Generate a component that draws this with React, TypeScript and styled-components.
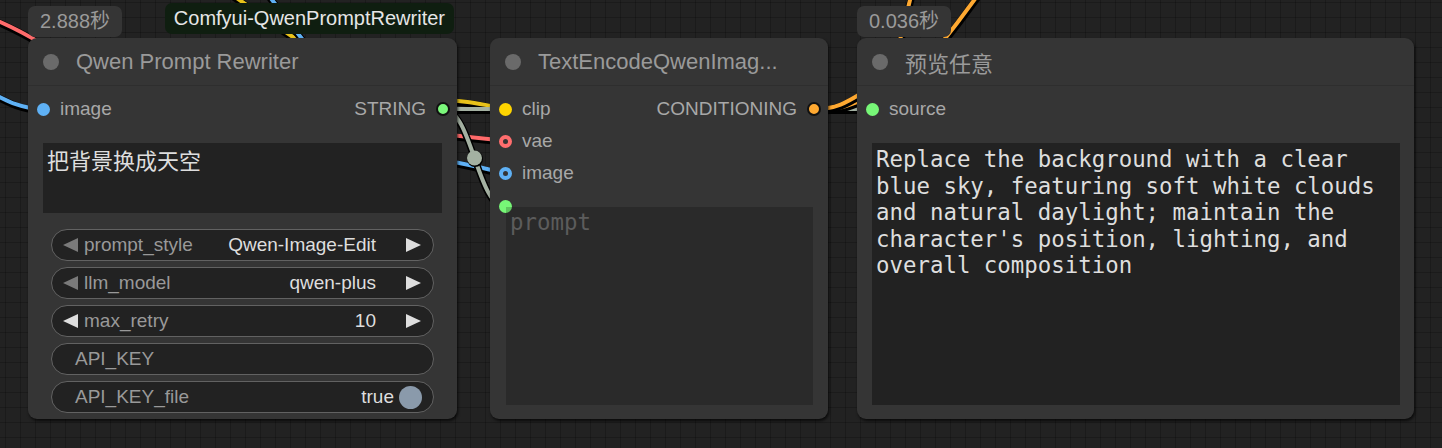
import React from "react";
import styled, { createGlobalStyle } from "styled-components";

const UI = `"Liberation Sans", "Noto Sans CJK SC", sans-serif`;
const MONO = `"DejaVu Sans Mono", "Noto Sans CJK SC", monospace`;

const GlobalStyle = createGlobalStyle`
  html, body { margin: 0; padding: 0; background: #222; }
  body { width: 1442px; height: 448px; overflow: hidden; }
  * { box-sizing: border-box; }
`;

const Canvas = styled.div`
  position: relative;
  width: 1442px;
  height: 448px;
  overflow: hidden;
  background-color: #222222;
  background-image:
    linear-gradient(rgba(0, 0, 0, 0.22) 1px, transparent 1px),
    linear-gradient(90deg, rgba(0, 0, 0, 0.22) 1px, transparent 1px);
  background-size: 15px 15px;
  background-position: 5px 2px;
  font-family: ${UI};
`;

const WireLayer = styled.svg`
  position: absolute;
  left: 0;
  top: 0;
  width: 1442px;
  height: 448px;
  overflow: visible;
`;

const NodeWrap = styled.div<{ $x: number; $w: number }>`
  position: absolute;
  left: ${(p) => p.$x}px;
  top: 0;
  width: ${(p) => p.$w}px;
  display: flex;
  flex-direction: column;
`;

const BadgeRow = styled.div`
  height: 38px;
  display: flex;
  justify-content: space-between;
  align-items: flex-start;
`;

const TimeBadge = styled.div`
  margin-top: 6px;
  height: 31px;
  padding: 0 12px;
  border-radius: 7px;
  background: #353535;
  color: #9a9a9a;
  font-size: 20px;
  line-height: 31px;
  white-space: nowrap;
`;

const SourceBadge = styled.div`
  margin-top: 3px;
  margin-right: 3px;
  height: 31px;
  padding: 0 9px;
  border-radius: 7px;
  background: #0f1e10;
  color: #e6e6e6;
  font-size: 20px;
  line-height: 31px;
  white-space: nowrap;
`;

const NodeBox = styled.div`
  position: relative;
  height: 381px;
  background: #353535;
  border-radius: 9px;
  box-shadow: 1px 2px 3px rgba(0, 0, 0, 0.7);
  display: flex;
  flex-direction: column;
`;

const TitleBar = styled.div`
  height: 48px;
  flex: none;
  display: flex;
  align-items: center;
  border-bottom: 1px solid #2e2e2e;
`;

const TitleDot = styled.span`
  width: 16px;
  height: 16px;
  border-radius: 50%;
  background: #6a6a6a;
  margin-left: 15px;
  margin-right: 17px;
  flex: none;
`;

const TitleText = styled.span`
  color: #9a9a9a;
  font-size: 22px;
  white-space: nowrap;
`;

const Body = styled.div`
  flex: 1;
  display: flex;
  flex-direction: column;
  padding-top: 7px;
  min-height: 0;
`;

const SlotRow = styled.div`
  height: 32px;
  flex: none;
  display: flex;
  align-items: center;
  justify-content: space-between;
`;

const SlotSide = styled.div<{ $side: "in" | "out" }>`
  display: flex;
  align-items: center;
  gap: 10px;
  ${(p) => (p.$side === "in" ? "padding-left: 9px;" : "padding-right: 7px;")}
`;

const SlotLabel = styled.span`
  color: #a8a8a8;
  font-size: 19px;
  white-space: nowrap;
`;

const SlotDot = styled.span<{ $color: string; $kind: "fill" | "ring" | "out" }>`
  flex: none;
  border-radius: 50%;
  ${(p) =>
    p.$kind === "fill"
      ? `width: 13px; height: 13px; background: ${p.$color};`
      : p.$kind === "ring"
      ? `width: 13px; height: 13px; background: #353535; border: 4.5px solid ${p.$color};`
      : `width: 14px; height: 14px; background: ${p.$color}; border: 2px solid #111;`}
`;

const PromptBox = styled.div`
  margin: 18px 15px 0 15px;
  height: 70px;
  flex: none;
  background: #222;
  color: #dedede;
  font-family: ${MONO};
  font-size: 22px;
  line-height: 26px;
  padding: 6px 4px;
`;

const WidgetList = styled.div`
  margin: 16px 23px 0 23px;
  display: flex;
  flex-direction: column;
  gap: 6px;
`;

const Widget = styled.div`
  height: 32px;
  border: 1px solid #626262;
  border-radius: 16px;
  background: #222;
  display: flex;
  align-items: center;
  font-size: 19px;
  white-space: nowrap;
`;

const ComboWidget = styled(Widget)`
  padding: 0 11px 0 10px;
`;

const PlainWidget = styled(Widget)`
  padding: 0 11px 0 23px;
`;

const WLabel = styled.span`
  color: #999;
  flex: 1;
`;

const ComboLabel = styled(WLabel)`
  margin-left: 6px;
`;

const WValue = styled.span`
  color: #dedede;
`;

const ArrowSvg = styled.svg`
  flex: none;
  display: block;
`;

const ValueGap = styled.span`
  width: 30px;
  flex: none;
`;

const ToggleKnob = styled.span`
  width: 23px;
  height: 23px;
  border-radius: 50%;
  background: #8a9aab;
  margin-left: 5px;
  flex: none;
`;

const AreaWrap = styled.div<{ $ml: number; $mr: number }>`
  position: relative;
  flex: 1;
  margin: 18px ${(p) => p.$mr}px 14px ${(p) => p.$ml}px;
  display: flex;
`;

const WidgetSlotDot = styled.span`
  position: absolute;
  left: -7px;
  top: -7px;
  width: 13px;
  height: 13px;
  border-radius: 50%;
  background: #77f777;
  z-index: 0;
`;

const EmptyArea = styled.div`
  position: relative;
  z-index: 1;
  flex: 1;
  background: rgba(0, 0, 0, 0.2);
  color: #5c5c5c;
  font-family: ${MONO};
  font-size: 22.4px;
  line-height: 26.5px;
  padding: 2px 4px;
`;

const TextArea = styled.div`
  flex: 1;
  background: #222;
  color: #dedede;
  font-family: ${MONO};
  font-size: 22.4px;
  line-height: 26.5px;
  padding: 3px 4px;
  white-space: pre-wrap;
  word-break: normal;
`;

const Arrow = ({ dir, color }: { dir: "l" | "r"; color: string }) => (
  <ArrowSvg width="16" height="14" viewBox="0 0 16 14">
    {dir === "l" ? (
      <polygon points="16,0 16,14 1,7" fill={color} />
    ) : (
      <polygon points="0,0 0,14 15,7" fill={color} />
    )}
  </ArrowSvg>
);

const Combo = ({ label, value, leftDim }: { label: string; value: string; leftDim?: boolean }) => (
  <ComboWidget>
    <Arrow dir="l" color={leftDim ? "#7a7a7a" : "#dedede"} />
    <ComboLabel>{label}</ComboLabel>
    <WValue>{value}</WValue>
    <ValueGap />
    <Arrow dir="r" color="#dedede" />
  </ComboWidget>
);

type WireProps = { d: string; color: string };
const Wire = ({ d, color }: WireProps) => (
  <g>
    <path d={d} stroke="#000" strokeWidth={7} fill="none" transform="translate(0.5 1.5)" />
    <path d={d} stroke={color} strokeWidth={4} fill="none" />
  </g>
);

const SAGE = "#a4b1a2";
const wires: WireProps[] = [
  { d: "M -30 10 Q 10 24 42 44 L 440 134 Q 470 137 506 141", color: "#ff6b6b" },
  { d: "M -30 82 C 0 96, 15 109, 43 109", color: "#5fb1f5" },
  { d: "M 228 -8 L 300 42 L 440 100 C 470 101, 480 104, 506 109", color: "#e8c21a" },
  { d: "M 266 -8 L 306 44 L 440 160 C 465 163, 480 168, 506 173", color: "#5fb1f5" },
  { d: "M 443 109 L 872 109", color: SAGE },
  { d: "M 443 109 C 472 109, 477 207, 506 207", color: SAGE },
  { d: "M 814 110 C 842 110, 852 104, 872 96 L 900 40 L 912 -8", color: "#ffa931" },
  { d: "M 814 109 C 840 109, 850 100, 870 88 L 940 45 Q 960 20 980 -8", color: "#ffa931" },
];

const Wires = () => (
  <WireLayer>
    {wires.map((w, i) => (
      <Wire key={i} {...w} />
    ))}
    <circle cx={474.5} cy={158} r={8} fill="#000" transform="translate(0.5 1)" />
    <circle cx={474.5} cy={158} r={7.5} fill={SAGE} />
  </WireLayer>
);

const ResultText =
  "Replace the background with a clear blue sky, featuring soft white clouds and natural daylight; maintain the character's position, lighting, and overall composition";

export default function App() {
  return (
    <>
      <GlobalStyle />
      <Canvas>
        <Wires />

        <NodeWrap $x={28} $w={429}>
          <BadgeRow>
            <TimeBadge>2.888秒</TimeBadge>
            <SourceBadge>Comfyui-QwenPromptRewriter</SourceBadge>
          </BadgeRow>
          <NodeBox>
            <TitleBar>
              <TitleDot />
              <TitleText>Qwen Prompt Rewriter</TitleText>
            </TitleBar>
            <Body>
              <SlotRow>
                <SlotSide $side="in">
                  <SlotDot $color="#5fb1f5" $kind="fill" />
                  <SlotLabel>image</SlotLabel>
                </SlotSide>
                <SlotSide $side="out">
                  <SlotLabel>STRING</SlotLabel>
                  <SlotDot $color="#7bf77b" $kind="out" />
                </SlotSide>
              </SlotRow>
              <PromptBox>把背景换成天空</PromptBox>
              <WidgetList>
                <Combo label="prompt_style" value="Qwen-Image-Edit" leftDim />
                <Combo label="llm_model" value="qwen-plus" leftDim />
                <Combo label="max_retry" value="10" />
                <PlainWidget>
                  <WLabel>API_KEY</WLabel>
                </PlainWidget>
                <PlainWidget>
                  <WLabel>API_KEY_file</WLabel>
                  <WValue>true</WValue>
                  <ToggleKnob />
                </PlainWidget>
              </WidgetList>
            </Body>
          </NodeBox>
        </NodeWrap>

        <NodeWrap $x={490} $w={338}>
          <BadgeRow />
          <NodeBox>
            <TitleBar>
              <TitleDot />
              <TitleText>TextEncodeQwenImag...</TitleText>
            </TitleBar>
            <Body>
              <SlotRow>
                <SlotSide $side="in">
                  <SlotDot $color="#ffd500" $kind="fill" />
                  <SlotLabel>clip</SlotLabel>
                </SlotSide>
                <SlotSide $side="out">
                  <SlotLabel>CONDITIONING</SlotLabel>
                  <SlotDot $color="#ffa931" $kind="out" />
                </SlotSide>
              </SlotRow>
              <SlotRow>
                <SlotSide $side="in">
                  <SlotDot $color="#ff6e6e" $kind="ring" />
                  <SlotLabel>vae</SlotLabel>
                </SlotSide>
              </SlotRow>
              <SlotRow>
                <SlotSide $side="in">
                  <SlotDot $color="#5fb1f5" $kind="ring" />
                  <SlotLabel>image</SlotLabel>
                </SlotSide>
              </SlotRow>
              <AreaWrap $ml={16} $mr={15}>
                <WidgetSlotDot />
                <EmptyArea>prompt</EmptyArea>
              </AreaWrap>
            </Body>
          </NodeBox>
        </NodeWrap>

        <NodeWrap $x={857} $w={557}>
          <BadgeRow>
            <TimeBadge>0.036秒</TimeBadge>
          </BadgeRow>
          <NodeBox>
            <TitleBar>
              <TitleDot />
              <TitleText>预览任意</TitleText>
            </TitleBar>
            <Body>
              <SlotRow>
                <SlotSide $side="in">
                  <SlotDot $color="#77f777" $kind="fill" />
                  <SlotLabel>source</SlotLabel>
                </SlotSide>
              </SlotRow>
              <AreaWrap $ml={15} $mr={14}>
                <TextArea>{ResultText}</TextArea>
              </AreaWrap>
            </Body>
          </NodeBox>
        </NodeWrap>
      </Canvas>
    </>
  );
}
